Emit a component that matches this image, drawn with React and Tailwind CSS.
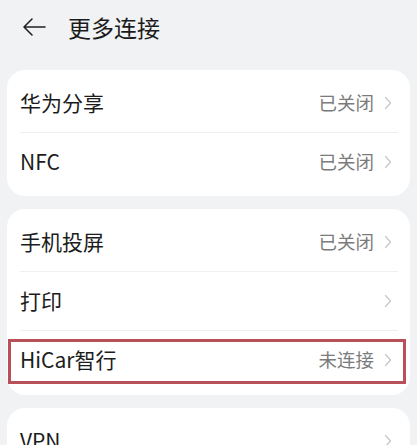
import React from "react";

const Chevron = () => (
  <svg width="8" height="14" viewBox="0 0 8 14" fill="none" className="shrink-0">
    <path d="M1.5 1.5 L6.5 7 L1.5 12.5" stroke="#c8c8c8" strokeWidth="1.3" strokeLinecap="round" strokeLinejoin="round" />
  </svg>
);

function Row({ label, value, divider, highlight }) {
  return (
    <div className="relative">
      <div className="flex h-[58px] items-center justify-between pl-[13px] pr-[18px]">
        <span className="text-[21px] text-[#1c1c1c]">{label}</span>
        <div className="flex items-center gap-[10px]">
          {value ? <span className="text-[18.5px] text-[#7b7b7b]">{value}</span> : null}
          <Chevron />
        </div>
      </div>
      {divider ? <div className="ml-[13px] mr-[12px] h-px bg-[#efefef]" /> : null}
      {highlight ? (
        <div className="absolute left-[1px] right-[4px] top-[8px] bottom-[5px] border-[3px] border-[#b8505a]" />
      ) : null}
    </div>
  );
}

export default function App() {
  return (
    <div
      className="h-[445px] w-[417px] overflow-hidden bg-[#f1f2f4]"
      style={{ fontFamily: '"Noto Sans CJK SC", "Noto Sans", sans-serif' }}
    >
      <div className="flex h-[54px] items-center pl-[22px]">
        <svg width="24" height="20" viewBox="0 0 24 20" fill="none">
          <path d="M10 2 L2 10 L10 18 M2 10 H23" stroke="#222" strokeWidth="1.6" strokeLinecap="round" strokeLinejoin="round" />
        </svg>
        <span className="ml-[22px] text-[23px] text-[#1b1b1b]">更多连接</span>
      </div>

      <div className="mx-[7px] mt-[16px] flex flex-col gap-[13px]">
        <div className="rounded-[18px] bg-white pt-[4px] pb-[5px]">
          <Row label="华为分享" value="已关闭" divider />
          <Row label="NFC" value="已关闭" />
        </div>

        <div className="rounded-[18px] bg-white pt-[4px] pb-[6px]">
          <Row label="手机投屏" value="已关闭" divider />
          <Row label="打印" divider />
          <Row label="HiCar智行" value="未连接" highlight />
        </div>

        <div className="rounded-[18px] bg-white pt-[4px] pb-[5px]">
          <Row label="VPN" />
        </div>
      </div>
    </div>
  );
}
